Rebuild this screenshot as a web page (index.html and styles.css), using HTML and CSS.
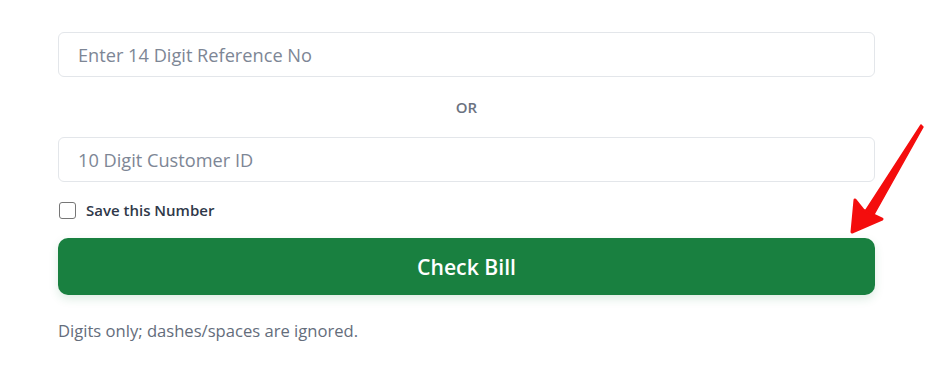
FILE: index.html
```html
<!DOCTYPE html>
<html>
<head>
<meta charset="utf-8">
<link rel="stylesheet" href="styles.css">
</head>
<body>
<div class="form">
  <input class="field" type="text" placeholder="Enter 14 Digit Reference No">
  <div class="or">OR</div>
  <input class="field" type="text" placeholder="10 Digit Customer ID">
  <label class="save"><span class="box"></span><span>Save this Number</span></label>
  <button class="btn">Check Bill</button>
  <p class="hint">Digits only; dashes/spaces are ignored.</p>
</div>
<svg class="arrow" width="90" height="125" viewBox="0 0 90 125">
  <path d="M83 3 L85 5 L34 96 L26 91 Z" fill="#f40d0d" stroke="#f40d0d" stroke-width="1.5" stroke-linejoin="round"/>
  <path d="M14 110 L17 78 L25 88 L44 97 Z" fill="#f40d0d" stroke="#f40d0d" stroke-width="3" stroke-linejoin="round"/>
</svg>
</body>
</html>
```
FILE: styles.css
```css
html, body { margin: 0; padding: 0; background: #fff; }
body { font-family: "Open Sans", "Noto Sans", sans-serif; position: relative; width: 931px; height: 365px; overflow: hidden; }
.form { display: flex; flex-direction: column; margin-left: 58px; width: 817px; padding-top: 32px; }
.field {
  box-sizing: border-box; height: 45px; width: 100%;
  border: 1px solid #e3e6ea; border-radius: 6px;
  padding: 0 0 0 19px; font-family: inherit; font-size: 18.2px; color: #333;
  outline: none; background: #fff;
}
.field::placeholder { color: #7d8695; }
.or { height: 60px; display: flex; align-items: center; justify-content: center; font-size: 15px; font-weight: 600; color: #6b7280; }
.save { display: flex; align-items: center; gap: 10px; margin-top: 19px; height: 18px; margin-left: 1px; font-size: 15px; font-weight: 600; color: #2f3849; }
.box { width: 17px; height: 17px; box-sizing: border-box; border: 1.5px solid #767676; border-radius: 3px; background: #fff; }
.btn {
  margin-top: 19px; height: 57px; width: 100%; border: none; border-radius: 10px;
  background: #198040; color: #fff; font-family: inherit; font-size: 21.2px; font-weight: 600;
  box-shadow: 0 4px 10px rgba(25,128,64,0.15);
}
.hint { margin: 24px 0 0 0; font-size: 16.6px; color: #646d7b; }
.arrow { position: absolute; left: 838px; top: 122px; }
```
